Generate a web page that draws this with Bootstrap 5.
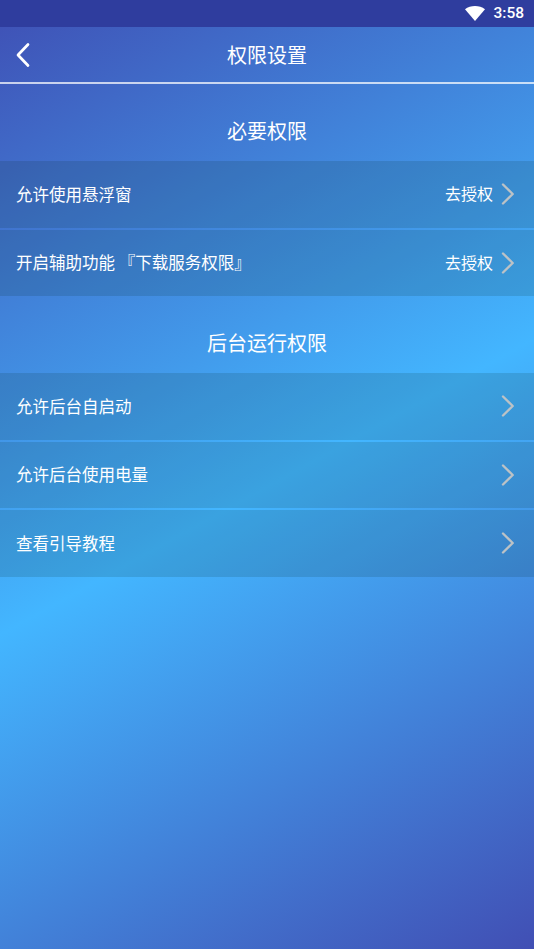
<!DOCTYPE html>
<html lang="zh"><head><meta charset="utf-8">
<link href="https://cdn.jsdelivr.net/npm/bootstrap@5.3.0/dist/css/bootstrap.min.css" rel="stylesheet">
<style>
html,body{height:100%;}
body{font-family:"Noto Sans CJK SC","Liberation Sans",sans-serif;color:#fff;background:transparent;}
.screen{width:534px;height:949px;overflow:hidden;background:linear-gradient(151deg,#3f4fb4 0%,#43b6ff 51%,#414fb4 100%);}
.statusbar{height:27px;background:#2f3d9e;padding-right:10px;font-family:Roboto,sans-serif;font-size:15.5px;font-weight:500;}
.topbar{height:57px;border-bottom:2px solid rgba(255,255,255,.72);position:relative;font-size:20px;}
.backbtn{position:absolute;left:15px;top:14.5px;}
.sect-title{height:77px;padding-top:32px;font-size:20px;line-height:30px;}
.perm{height:66.5px;padding:0 19px 0 16px;background:rgba(10,40,35,.14);font-size:16.5px;margin-bottom:2px;}
.perm-last{margin-bottom:0;}
.perm-act{font-size:16px;}
.act-label{margin-bottom:2px;}
.chev{fill:none;stroke:#bcc2c6;stroke-width:2.4;stroke-linecap:round;stroke-linejoin:round;}
</style></head><body>
<div class="screen">
<div class="statusbar d-flex justify-content-end align-items-center gap-2">
<svg width="20" height="15" viewBox="0 0 20 15"><path d="M0 3.2C5.5-1 14.5-1 20 3.2L10 15Z" fill="#fff"/></svg>
<span>3:58</span></div>
<div class="topbar d-flex justify-content-center align-items-center">
<svg class="backbtn" width="16" height="26" viewBox="0 0 16 26"><path d="M13 2.5 3 13l10 10.5" fill="none" stroke="#fff" stroke-width="2.7" stroke-linecap="round" stroke-linejoin="round"/></svg>
<span>权限设置</span></div>
<div class="sect-title text-center">必要权限</div>
<div class="perm d-flex align-items-center justify-content-between"><span>允许使用悬浮窗</span><span class="d-flex align-items-center gap-2 perm-act"><span class="act-label">去授权</span><svg width="14" height="24" viewBox="0 0 14 24"><path class="chev" d="M2 2.5 11.7 12 2 21.5"/></svg></span></div>
<div class="perm perm-last d-flex align-items-center justify-content-between"><span>开启辅助功能 『下载服务权限』</span><span class="d-flex align-items-center gap-2 perm-act"><span class="act-label">去授权</span><svg width="14" height="24" viewBox="0 0 14 24"><path class="chev" d="M2 2.5 11.7 12 2 21.5"/></svg></span></div>
<div class="sect-title text-center">后台运行权限</div>
<div class="perm d-flex align-items-center justify-content-between"><span>允许后台自启动</span><svg width="14" height="24" viewBox="0 0 14 24"><path class="chev" d="M2 2.5 11.7 12 2 21.5"/></svg></div>
<div class="perm d-flex align-items-center justify-content-between"><span>允许后台使用电量</span><svg width="14" height="24" viewBox="0 0 14 24"><path class="chev" d="M2 2.5 11.7 12 2 21.5"/></svg></div>
<div class="perm perm-last d-flex align-items-center justify-content-between"><span>查看引导教程</span><svg width="14" height="24" viewBox="0 0 14 24"><path class="chev" d="M2 2.5 11.7 12 2 21.5"/></svg></div>
</div>
<script src="https://cdn.jsdelivr.net/npm/bootstrap@5.3.0/dist/js/bootstrap.bundle.min.js"></script>
</body></html>
